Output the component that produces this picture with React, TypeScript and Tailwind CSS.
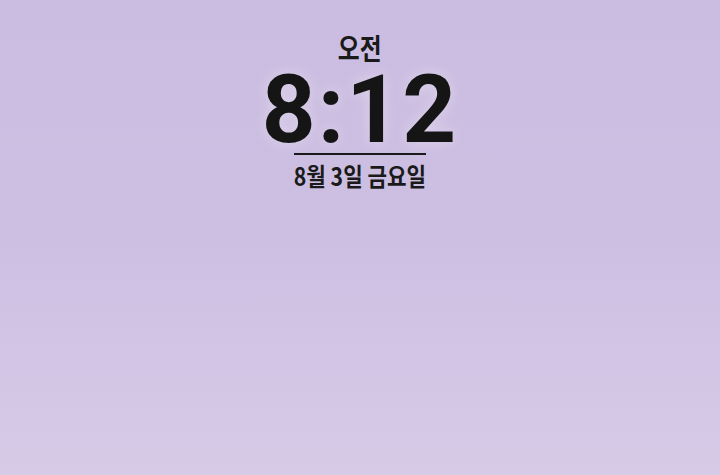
import React from 'react';

export default function App() {
  return (
    <div className="w-[720px] h-[475px] overflow-hidden bg-gradient-to-b from-[#cbbde1] via-[#cdbfe2] to-[#d7cae7] flex flex-col items-center font-['Noto_Sans_CJK_KR','Noto_Sans',sans-serif] text-[#1a1a1a]">
      {/* am/pm */}
      <div className="mt-[33px] text-[29px] leading-[29px] font-bold scale-x-[0.82]">오전</div>
      {/* time */}
      <div className="mt-[8px] text-[94px] leading-[80px] font-bold text-[#151515] tracking-[2px] font-['Roboto','Liberation_Sans',sans-serif] [text-shadow:0_0_14px_rgba(255,255,255,0.35)]">
        8:12
      </div>
      <div className="mt-[3px] w-[132px] h-[2px] bg-[#1a1a1a]" />
      {/* date */}
      <div className="mt-[6px] text-[25px] leading-[28px] font-bold scale-x-[0.85] whitespace-nowrap">
        8월 3일 금요일
      </div>
    </div>
  );
}
